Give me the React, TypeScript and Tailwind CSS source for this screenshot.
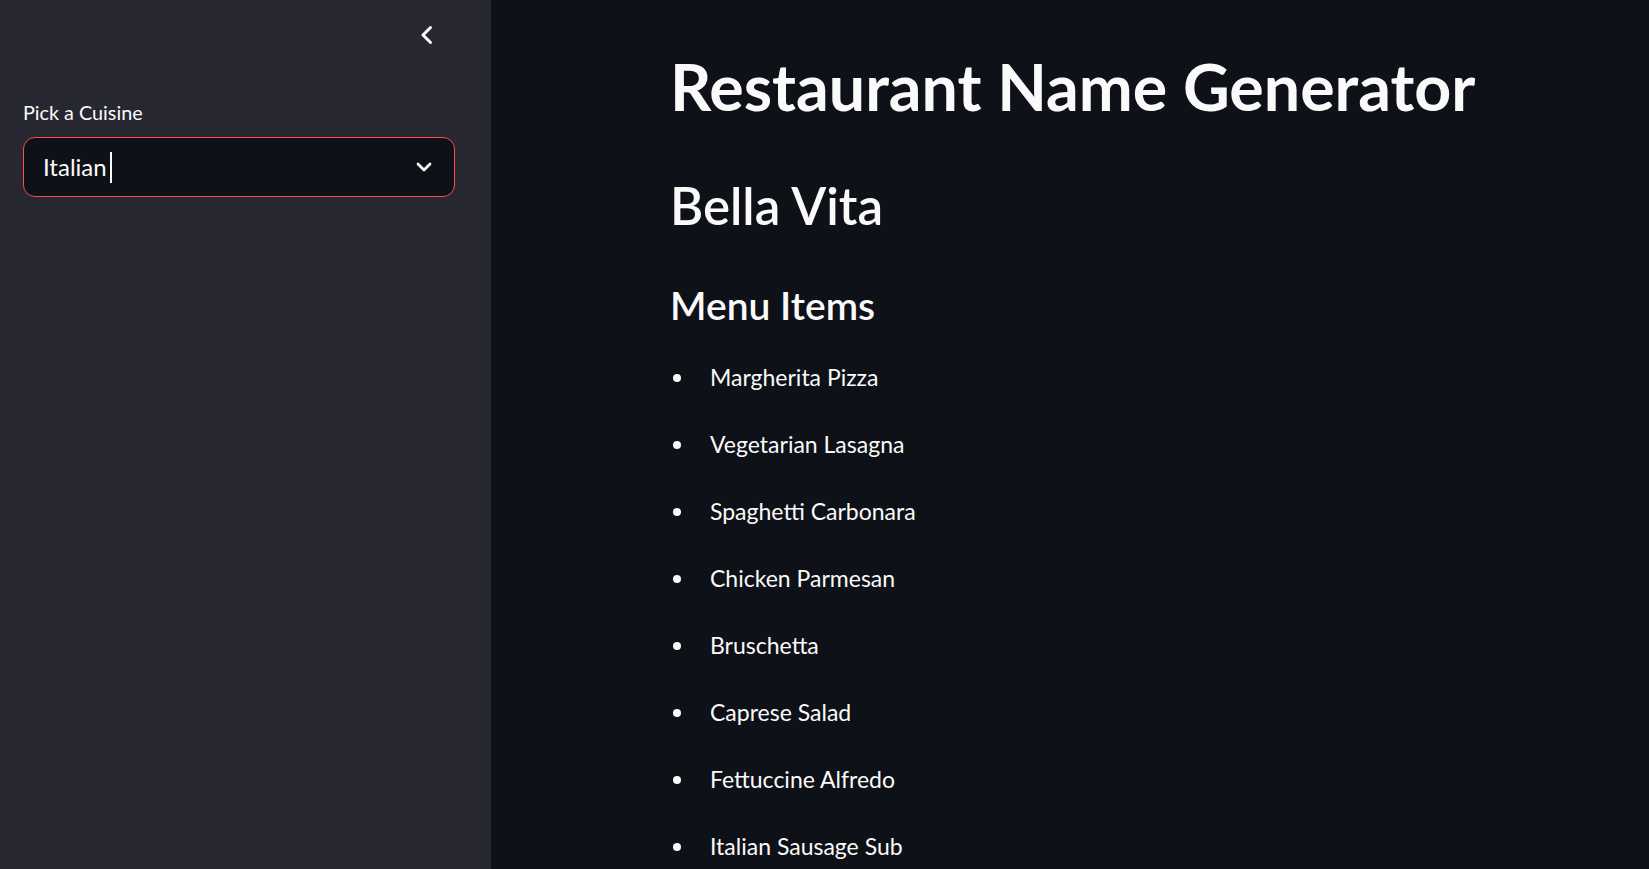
import React from "react"

const menuItems = [
  "Margherita Pizza",
  "Vegetarian Lasagna",
  "Spaghetti Carbonara",
  "Chicken Parmesan",
  "Bruschetta",
  "Caprese Salad",
  "Fettuccine Alfredo",
  "Italian Sausage Sub",
]

function Sidebar() {
  return (
    <aside className="w-[491px] shrink-0 h-full bg-[#262730] flex flex-col">
      {/* collapse button */}
      <div className="flex justify-end pr-[58px] pt-[25px] h-[45px]">
        <svg width="14" height="20" viewBox="0 0 14 20" fill="none">
          <path d="M11.5 2.5 L4 10 L11.5 17.5" stroke="#fafafa" strokeWidth="3" strokeLinecap="round" strokeLinejoin="round" />
        </svg>
      </div>

      <div className="pl-[23px] pr-[36px] pt-[55px]">
        <label className="block text-[19.8px] leading-[24px] text-[#fafafa]">Pick a Cuisine</label>
        <div className="mt-[13px] h-[60px] rounded-[12px] border border-[#ff4b4b] bg-[#0e1117] flex items-center pl-[19px] pr-[22px]">
          <span className="text-[24px] leading-[30px] text-[#fafafa]">Italian</span>
          <span className="ml-[3px] w-[2px] h-[31px] bg-[#fafafa]" />
          <div className="flex-1" />
          <svg width="16" height="10" viewBox="0 0 16 10" fill="none">
            <path d="M2 2 L8 8 L14 2" stroke="#fafafa" strokeWidth="2.8" strokeLinecap="round" strokeLinejoin="round" />
          </svg>
        </div>
      </div>
    </aside>
  )
}

export default function App() {
  return (
    <div
      className="w-[1649px] h-[869px] overflow-hidden flex bg-[#0e1117] text-[#fafafa]"
      style={{ fontFamily: "Lato, 'Open Sans', sans-serif" }}
    >
      <Sidebar />

      <main className="flex-1 pl-[179px] pt-[46px] flex flex-col">
        <h1 className="text-[64.5px] leading-[80px] h-[80px] font-bold whitespace-nowrap">Restaurant Name Generator</h1>
        <h2 className="mt-[50px] text-[51px] leading-[60px] h-[60px] font-semibold">Bella Vita</h2>
        <h3 className="mt-[45px] text-[39px] leading-[48px] h-[48px] font-semibold">Menu Items</h3>
        <ul className="mt-[15px] flex flex-col">
          {menuItems.map((item) => (
            <li key={item} className="h-[67px] flex items-center text-[23px]">
              <span className="w-[40px] flex items-center">
                <span className="ml-[3px] w-[8px] h-[8px] rounded-full bg-[#fafafa]" />
              </span>
              <span className="leading-[67px]">{item}</span>
            </li>
          ))}
        </ul>
      </main>
    </div>
  )
}
